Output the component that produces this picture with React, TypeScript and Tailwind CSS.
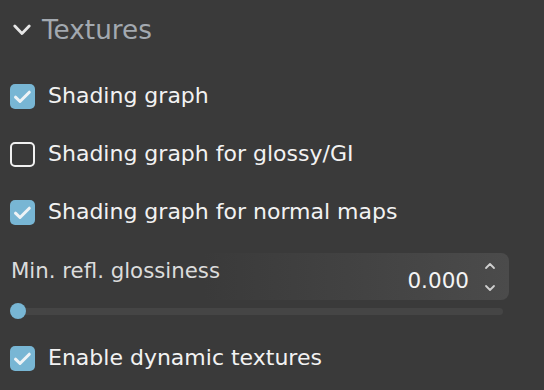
import React from "react";

function Check({ checked }: { checked: boolean }) {
  if (checked) {
    return (
      <div className="w-[25px] h-[25px] rounded-[5px] bg-[#78b6d4] flex items-center justify-center shrink-0">
        <svg width="25" height="25" viewBox="0 0 25 25">
          <path d="M5.5 13.2 L10 17.5 L19.3 8.2" fill="none" stroke="#eef3f6" strokeWidth="3" strokeLinecap="round" strokeLinejoin="round" />
        </svg>
      </div>
    );
  }
  return <div className="w-[25px] h-[25px] rounded-[5px] border-2 border-[#f0f0f0] shrink-0" />;
}

function Row({ checked, label }: { checked: boolean; label: string }) {
  return (
    <div className="h-[58px] flex items-center pl-[10px] gap-[13px]">
      <Check checked={checked} />
      <span className="text-[22px] text-[#f2f2f2] leading-none">{label}</span>
    </div>
  );
}

export default function App() {
  return (
    <div
      className="w-[544px] h-[390px] bg-[#3a3a3a] overflow-hidden"
      style={{ fontFamily: '"DejaVu Sans", sans-serif' }}
    >
      <div className="h-[60px] flex items-center">
        <svg width="18" height="12" viewBox="0 0 18 12" className="ml-[13px]">
          <path d="M1.8 2 L9 9.5 L16.2 2" fill="none" stroke="#e6e6e6" strokeWidth="2.8" strokeLinecap="round" strokeLinejoin="round" />
        </svg>
        <span className="ml-[11px] text-[26.3px] text-[#a3a9b0] leading-none">Textures</span>
      </div>
      <div className="mt-[7px]">
        <Row checked label="Shading graph" />
        <Row checked={false} label="Shading graph for glossy/GI" />
        <Row checked label="Shading graph for normal maps" />
      </div>
      <div className="mt-[12px] w-[509px] h-[47px] rounded-r-[8px] bg-[linear-gradient(to_right,rgba(75,75,75,0)_40%,#4b4b4b_100%)] flex items-center">
        <span className="ml-[11px] -mt-[12px] text-[21.3px] text-[#dcdcdc] leading-none">Min. refl. glossiness</span>
        <span className="ml-auto mt-[9px] text-[21.5px] text-[#f4f4f4] leading-none">0.000</span>
        <svg width="12" height="30" viewBox="0 0 12 30" className="ml-[15px] mr-[13px]">
          <path d="M2 6 L6 2 L10 6" fill="none" stroke="#cfcfcf" strokeWidth="1.8" strokeLinecap="round" strokeLinejoin="round" />
          <path d="M2 24 L6 28 L10 24" fill="none" stroke="#cfcfcf" strokeWidth="1.8" strokeLinecap="round" strokeLinejoin="round" />
        </svg>
      </div>
      <div className="mt-[3px] ml-[10px] w-[493px] h-[16px] flex items-center relative">
        <div className="w-full h-[7px] rounded-full bg-[#454545]" />
        <div className="absolute left-0 top-0 w-[16px] h-[16px] rounded-full bg-[#78b6d4]" />
      </div>
      <div className="mt-[10px]">
        <Row checked label="Enable dynamic textures" />
      </div>
    </div>
  );
}
